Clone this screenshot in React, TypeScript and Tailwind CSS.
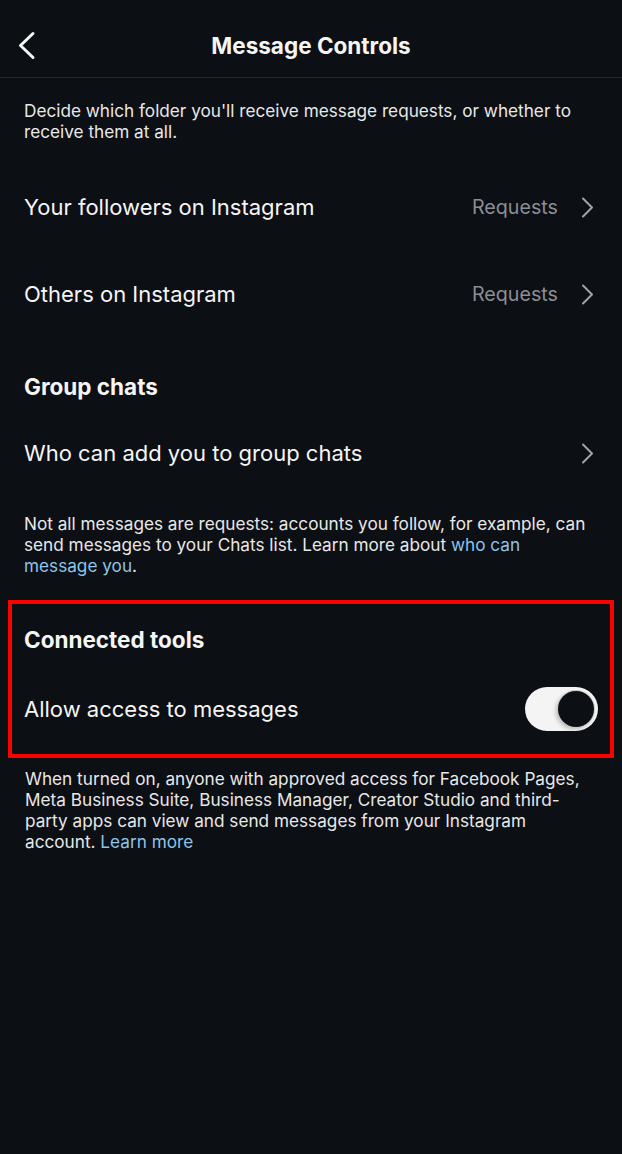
import React from "react";

function Chevron({ className }: { className?: string }) {
  return (
    <svg width="13" height="21" viewBox="0 0 13 21" className={className} fill="none">
      <path d="M2 1.5 L11 10.5 L2 19.5" stroke="currentColor" strokeWidth="2" strokeLinecap="round" strokeLinejoin="round" />
    </svg>
  );
}

function Row({ label, value, className }: { label: string; value?: string; className?: string }) {
  return (
    <div className={`flex items-center justify-between ${className ?? ""}`}>
      <span className="text-[22px] text-[#f5f5f5]">{label}</span>
      <div className="flex items-center">
        {value && <span className="text-[19.7px] text-[#8b8e93] mr-[23px]">{value}</span>}
        <Chevron className="text-[#a2a4a8] mr-[4px]" />
      </div>
    </div>
  );
}

export default function App() {
  return (
    <div
      className="w-[622px] h-[1154px] bg-[#0c0f14] text-[#f5f5f5] overflow-hidden"
      style={{ fontFamily: "Inter, 'Noto Sans', sans-serif" }}
    >
      <header className="relative h-[78px] border-b border-[#23272d] flex items-center justify-center">
        <svg width="22" height="30" viewBox="0 0 22 30" className="absolute left-[16px] top-[31px]" fill="none">
          <path d="M17 2.5 L4.5 14.5 L17 26.5" stroke="#f5f5f5" strokeWidth="3" strokeLinecap="round" strokeLinejoin="round" />
        </svg>
        <h1 className="text-[22.5px] font-bold mt-[14px]">Message Controls</h1>
      </header>

      <div className="px-6">
        <p className="mt-[22px] text-[17.2px] leading-[21px] text-[#e8e8e8]">
          Decide which folder you'll receive message requests, or whether to receive them at all.
        </p>
        <Row label="Your followers on Instagram" value="Requests" className="mt-[22px] h-[87px]" />
        <Row label="Others on Instagram" value="Requests" className="h-[87px]" />
        <h2 className="pt-[35px] text-[22.5px] leading-[28px] font-bold">Group chats</h2>
        <Row label="Who can add you to group chats" className="h-[105px]" />
        <p className="mt-[7px] text-[17.2px] leading-[21px] text-[#e8e8e8]">
          Not all messages are requests: accounts you follow, for example, can send messages to your Chats list. Learn more about{" "}
          <span className="text-[#8ec3ea]">who can message you</span>.
        </p>
      </div>

      <div className="mx-2 mt-[24px] border-4 border-[#ff0000] px-3 pt-[22px] pb-[23px]">
        <h2 className="text-[22.5px] leading-[28px] font-bold">Connected tools</h2>
        <div className="mt-[33px] h-[44px] flex items-center justify-between">
          <span className="text-[22px] text-[#f5f5f5]">Allow access to messages</span>
          <div className="w-[73px] h-[44px] rounded-full bg-[#f4f4f4] flex items-center justify-end pr-[4px]">
            <div className="w-[36px] h-[36px] rounded-full bg-[#0c0f14] shadow-[0_0_0_1px_#c9c9c9,-2px_2px_4px_rgba(0,0,0,0.25)]" />
          </div>
        </div>
      </div>

      <p className="mt-[10px] pl-[25px] pr-[30px] text-[17.2px] leading-[21px] text-[#e8e8e8]">
        When turned on, anyone with approved access for Facebook Pages, Meta Business Suite, Business Manager, Creator Studio and third-party apps can view and send messages from your Instagram account.{" "}
        <span className="text-[#8ec3ea]">Learn more</span>
      </p>
    </div>
  );
}
